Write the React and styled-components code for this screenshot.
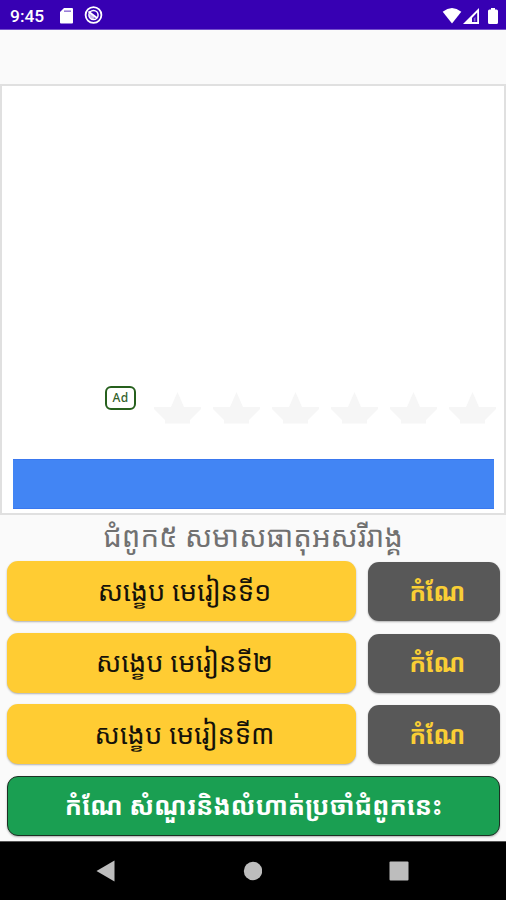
import React from "react";
import styled, { createGlobalStyle } from "styled-components";

const Global = createGlobalStyle`
  * { box-sizing: border-box; }
  body { margin: 0; background: #fafafa; }
`;

const Screen = styled.div`
  width: 506px;
  height: 900px;
  overflow: hidden;
  display: flex;
  flex-direction: column;
  background: #fafafa;
  font-family: Roboto, "Noto Sans Khmer", "Noto Sans", "DejaVu Sans", sans-serif;
`;

const StatusBar = styled.header`
  height: 30px;
  flex: none;
  display: flex;
  align-items: center;
  padding: 2px 7px 0 10px;
  background: #3700b3;
  border-bottom: 1px solid #7551cb;
  color: #fff;
`;

const Clock = styled.span`
  width: 49px;
  font-size: 17.4px;
  line-height: 20px;
  font-weight: 500;
`;

const StatusIcons = styled.div`
  display: flex;
  align-items: center;
  gap: ${(p) => p.$gap}px;
  margin-left: ${(p) => (p.$end ? "auto" : "0")};
  svg { display: block; }
`;

const AdCard = styled.section`
  height: 431px;
  flex: none;
  margin-top: 54px;
  display: flex;
  flex-direction: column;
  justify-content: flex-end;
  padding: 0 10px 4px 11px;
  background: #fff;
  border: 2px solid #e0e0e0;
`;

const RatingRow = styled.div`
  display: flex;
  align-items: flex-start;
  height: 73px;
  padding-left: 92px;
`;

const AdBadge = styled.span`
  width: 31px;
  height: 24px;
  flex: none;
  margin-right: 18px;
  display: flex;
  align-items: center;
  justify-content: center;
  border: 2px solid #26601d;
  border-radius: 6px;
  color: #33612b;
  font: 500 12px/16px "Noto Sans", sans-serif;
  letter-spacing: 0.3px;
`;

const Stars = styled.div`
  display: flex;
  flex: none;
  gap: 12px;
  padding-top: 6px;
  svg { display: block; }
`;

const AdAction = styled.div`
  height: 50px;
  flex: none;
  background: #4285f4;
  border-top: 1px solid #3a78ef;
  border-bottom: 1px solid #3a78ef;
`;

const Title = styled.h1`
  height: 46px;
  flex: none;
  margin: 0;
  text-align: center;
  color: #717171;
  font-size: 29.3px;
  line-height: 44px;
  font-weight: 400;
  white-space: nowrap;
`;

const Lessons = styled.main`
  display: flex;
  flex-direction: column;
  gap: 11.6px;
  padding: 0 6px 0 7px;
`;

const LessonRow = styled.div`
  display: grid;
  grid-template-columns: 349px 132px;
  gap: 12px;
`;

const Button = styled.button`
  height: 60px;
  padding: 0;
  border: 0;
  border-radius: 11px;
  font-family: inherit;
  white-space: nowrap;
  box-shadow: 0 1px 2px rgba(0, 0, 0, 0.3);
`;

const LessonButton = styled(Button)`
  padding: 0 0 2px 6px;
  background: #ffcc33;
  color: #15120a;
  font-size: 27.2px;
`;

const FixButton = styled(Button)`
  height: 59px;
  margin-top: 1px;
  padding: 0 0 2px 6px;
  background: #585858;
  color: #f9ce35;
  font-size: 25px;
  font-weight: 700;
  letter-spacing: -0.8px;
`;

const ExerciseButton = styled(Button)`
  padding-bottom: 2px;
  background: #1a9f52;
  border: 1px solid #1c3024;
  color: #fff;
  font-size: 25.5px;
  font-weight: 700;
`;

const NavBar = styled.nav`
  height: 59px;
  flex: none;
  margin-top: auto;
  display: flex;
  align-items: center;
  padding-left: 96px;
  gap: 127px;
  background: #000;
  border-top: 1px solid #555;
  svg { display: block; }
`;

const Star = () => (
  <svg width="47" height="33" viewBox="0 0 47 33">
    <path d="M23.5 0L30 15H47V17L36 28V31.5H11V28L0 17V15H17Z" fill="#f6f6f6" />
  </svg>
);

const lessons = ["សង្ខេប មេរៀនទី១", "សង្ខេប មេរៀនទី២", "សង្ខេប មេរៀនទី៣"];

export default function App() {
  return (
    <Screen>
      <Global />
      <StatusBar>
        <Clock>9:45</Clock>
        <StatusIcons $gap={10}>
          <svg width="15" height="18" viewBox="0 0 15 18">
            <path fill="#fff" d="M5 1H13Q14 1 14 2V15.5Q14 16.5 13 16.5H2Q1 16.5 1 15.5V5Z" />
            <path d="M5 4.2H12" stroke="#3700b3" strokeWidth="1.6" opacity=".5" />
          </svg>
          <svg width="19" height="20" viewBox="0 0 19 20" fill="none" stroke="#fff">
            <circle cx="9.5" cy="9" r="7.9" strokeWidth="1.8" />
            <circle cx="9.5" cy="9" r="4.6" strokeWidth="1.5" />
            <path d="M4.5 5.5L13 12" strokeWidth="1.8" />
            <path d="M5 9A4.6 4.6 0 0 0 9 13.4L11 11L7 7.5Z" fill="#fff" stroke="none" opacity=".7" />
          </svg>
        </StatusIcons>
        <StatusIcons $end $gap={1}>
          <svg width="20" height="18" viewBox="0 0 20 18">
            <path d="M.7 4.8Q10-2.6 19.3 4.8L10 16.5Z" fill="#fff" />
          </svg>
          <svg width="17" height="18" viewBox="0 0 17 18">
            <path fillRule="evenodd" d="M16 1V17H0ZM14.2 5.5L9 11V15H14.2Z" fill="#fff" />
            <path d="M10.8 11.5V14.5H12.5V9.8Z" fill="#fff" opacity=".4" />
          </svg>
          <svg width="18" height="18" viewBox="0 0 18 18">
            <path d="M8.5 2.5H10V1H14V2.5H15.5Q17 2.5 17 4V15.5Q17 17 15.5 17H8.5Q7 17 7 15.5V4Q7 2.5 8.5 2.5Z" fill="#fff" />
          </svg>
        </StatusIcons>
      </StatusBar>
      <AdCard>
        <RatingRow>
          <AdBadge>Ad</AdBadge>
          <Stars>
            {[1, 2, 3, 4, 5, 6].map((n) => <Star key={n} />)}
          </Stars>
        </RatingRow>
        <AdAction />
      </AdCard>
      <Title>ជំពូក៥ សមាសធាតុអសរីរាង្គ</Title>
      <Lessons>
        {lessons.map((lesson) => (
          <LessonRow key={lesson}>
            <LessonButton>{lesson}</LessonButton>
            <FixButton>កំណែ</FixButton>
          </LessonRow>
        ))}
        <ExerciseButton>កំណែ សំណួរនិងលំហាត់ប្រចាំជំពូកនេះ</ExerciseButton>
      </Lessons>
      <NavBar>
        <svg width="19" height="22" viewBox="0 0 19 22"><path d="M18.5 .5V21.5L.5 11Z" fill="#bdbdbd" /></svg>
        <svg width="20" height="20" viewBox="0 0 20 20"><circle cx="11" cy="10" r="9.2" fill="#bdbdbd" /></svg>
        <svg width="20" height="20" viewBox="0 0 20 20"><rect x=".5" y=".5" width="19" height="19" rx="1" fill="#bdbdbd" /></svg>
      </NavBar>
    </Screen>
  );
}
